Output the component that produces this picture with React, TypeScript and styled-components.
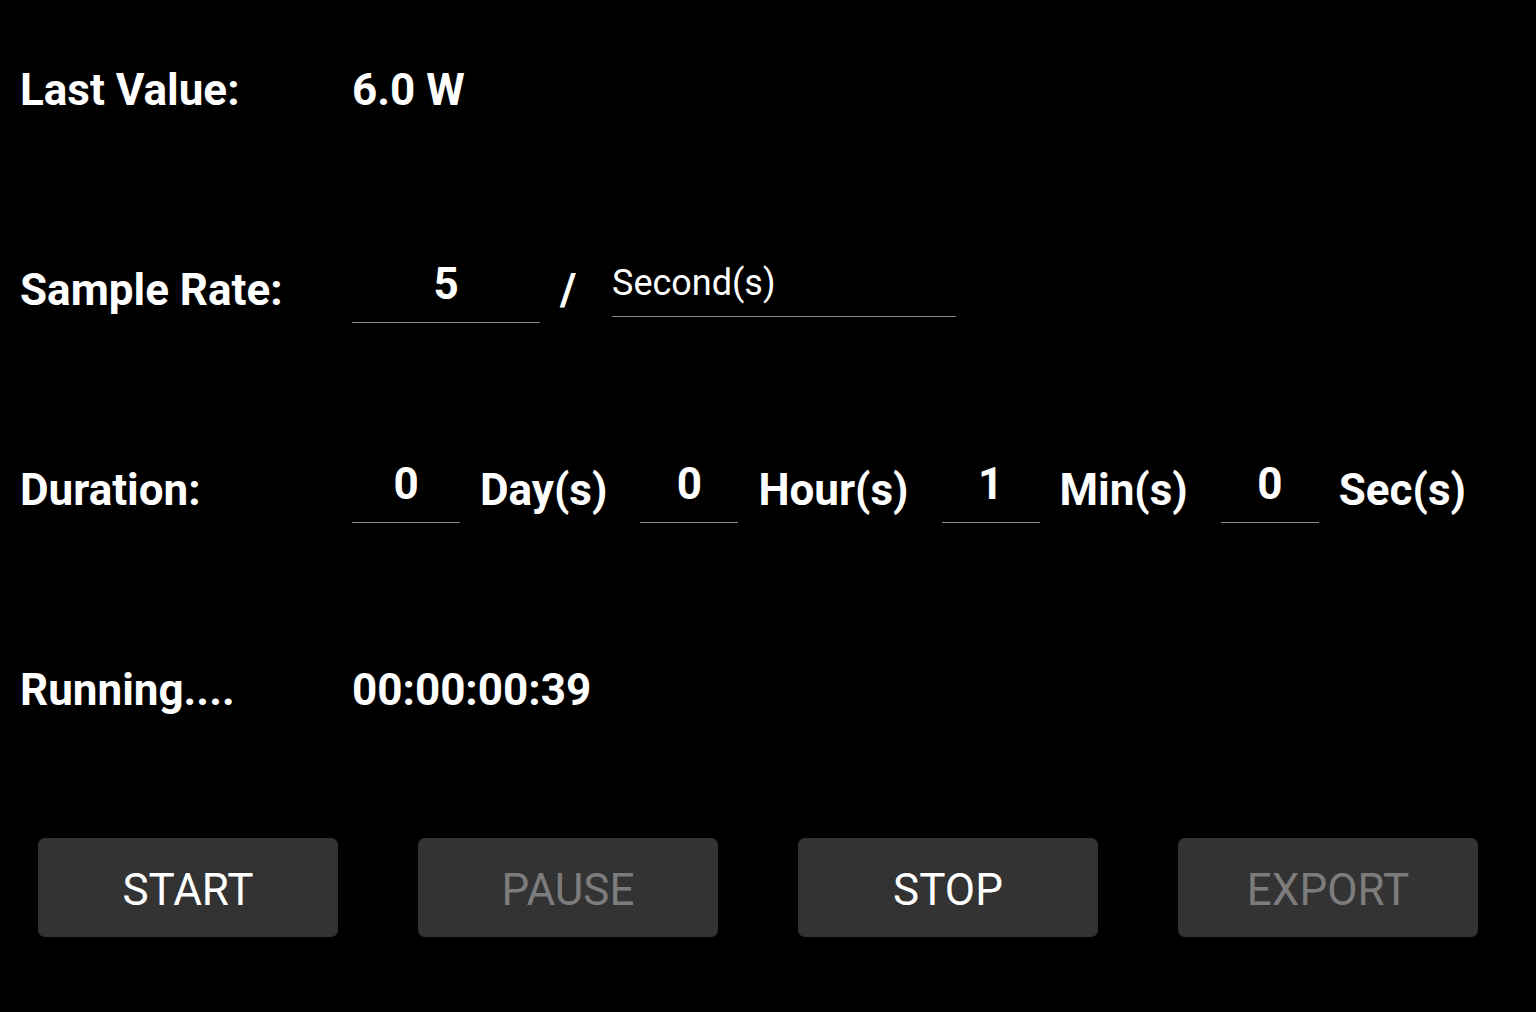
import React from "react";
import styled, { createGlobalStyle } from "styled-components";

const Global = createGlobalStyle`
  html, body { margin: 0; padding: 0; background: #000; }
  body { font-family: Roboto, "Noto Sans", sans-serif; color: #fff; }
`;

const Screen = styled.div`
  width: 1536px;
  height: 1012px;
  background: #000;
  box-sizing: border-box;
  padding: 40px 0 0 20px;
  display: flex;
  flex-direction: column;
  gap: 100px;
  overflow: hidden;
`;

const Row = styled.div`
  height: 100px;
  display: flex;
  align-items: center;
`;

const Label = styled.div`
  width: 332px;
  flex: none;
  font-size: 44px;
  font-weight: 700;
  line-height: 1;
  white-space: nowrap;
`;

const Value = styled.div`
  font-size: 44px;
  font-weight: 700;
  line-height: 1;
  white-space: nowrap;
`;

const Field = styled.div<{ $w: number }>`
  align-self: flex-start;
  width: ${(p) => p.$w}px;
  flex: none;
  height: 71px;
  margin-top: 12px;
  box-sizing: border-box;
  border-bottom: 1px solid #8a8a8a;
  display: flex;
  align-items: flex-start;
  justify-content: center;
  padding-top: 10px;
  font-size: 44px;
  font-weight: 700;
  line-height: 1;
`;

const Slash = styled.div`
  width: 72px;
  flex: none;
  box-sizing: border-box;
  padding-left: 20px;
  font-size: 44px;
  font-weight: 700;
  line-height: 1;
`;

const UnitField = styled.div`
  width: 344px;
  flex: none;
  height: 54px;
  box-sizing: border-box;
  border-bottom: 1px solid #8a8a8a;
  font-size: 36px;
  font-weight: 400;
  line-height: 1;
  padding-top: 2px;
`;

const Unit = styled.div`
  font-size: 44px;
  font-weight: 700;
  line-height: 1;
  white-space: nowrap;
  padding: 0 33px 0 20px;
`;

const ButtonBar = styled.div`
  display: flex;
  gap: 80px;
  padding-left: 18px;
  margin-top: -2px;
`;

const Button = styled.button<{ $disabled?: boolean }>`
  width: 300px;
  height: 99px;
  border: none;
  border-radius: 7px;
  background: #333333;
  color: ${(p) => (p.$disabled ? "#7c7c7c" : "#ffffff")};
  font-family: Roboto, "Noto Sans", sans-serif;
  font-size: 44px;
  font-weight: 400;
  padding: 4px 0 0 0;
`;

export default function App() {
  return (
    <>
      <Global />
      <Screen>
        <Row>
          <Label>Last Value:</Label>
          <Value>6.0 W</Value>
        </Row>
        <Row>
          <Label>Sample Rate:</Label>
          <Field $w={188}>5</Field>
          <Slash>/</Slash>
          <UnitField>Second(s)</UnitField>
        </Row>
        <Row>
          <Label>Duration:</Label>
          <Field $w={108}>0</Field>
          <Unit>Day(s)</Unit>
          <Field $w={98}>0</Field>
          <Unit>Hour(s)</Unit>
          <Field $w={98}>1</Field>
          <Unit>Min(s)</Unit>
          <Field $w={98}>0</Field>
          <Unit>Sec(s)</Unit>
        </Row>
        <Row>
          <Label>Running....</Label>
          <Value>00:00:00:39</Value>
        </Row>
        <ButtonBar>
          <Button>START</Button>
          <Button $disabled>PAUSE</Button>
          <Button>STOP</Button>
          <Button $disabled>EXPORT</Button>
        </ButtonBar>
      </Screen>
    </>
  );
}
